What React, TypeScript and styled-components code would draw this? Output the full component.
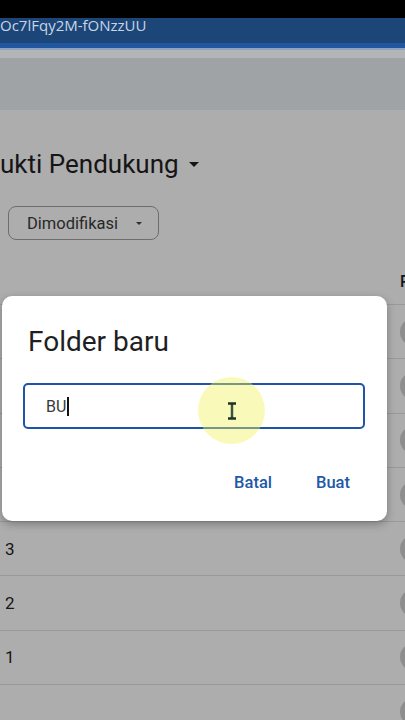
import React from 'react';
import styled, { createGlobalStyle } from 'styled-components';

const GlobalStyle = createGlobalStyle`
  html, body {
    margin: 0;
    padding: 0;
    background: #000;
  }
  body {
    font-family: Roboto, "Liberation Sans", Arial, sans-serif;
  }
  * {
    box-sizing: border-box;
  }
`;

const Screen = styled.div`
  position: relative;
  width: 405px;
  height: 720px;
  overflow: hidden;
  display: flex;
  flex-direction: column;
  background: #fff;
`;

const BlackBar = styled.div`
  height: 18px;
  flex: none;
  background: #000;
`;

const UrlBar = styled.div`
  height: 25px;
  flex: none;
  background: #1b4677;
  display: flex;
  align-items: flex-start;
`;

const UrlText = styled.span`
  font-family: "Open Sans", "Liberation Sans", sans-serif;
  font-size: 15px;
  line-height: 15px;
  color: #c9d5e6;
  white-space: nowrap;
`;

const UrlAccent = styled.div`
  height: 7px;
  flex: none;
  background: #2157a1;
  border-bottom: 2px solid #8ea3c0;
`;

const LightBand = styled.div`
  height: 8px;
  flex: none;
  background: #b4b5b6;
`;

const Page = styled.div`
  position: relative;
  flex: 1;
  display: flex;
  flex-direction: column;
  background: #fff;
`;

const Toolbar = styled.div`
  height: 52px;
  flex: none;
  background: #ebf1f5;
`;

const Content = styled.div`
  display: flex;
  flex-direction: column;
  align-items: flex-start;
`;

const Heading = styled.div`
  margin-top: 36px;
  height: 36px;
  display: flex;
  align-items: center;
  gap: 10px;
  font-size: 26px;
  color: #1f1f1f;
  white-space: nowrap;
`;

const Caret = styled.span<{ $size: number }>`
  width: 0;
  height: 0;
  border-left: ${p => p.$size}px solid transparent;
  border-right: ${p => p.$size}px solid transparent;
  border-top: ${p => p.$size}px solid ${p => (p.$size > 4 ? '#1f1f1f' : '#444746')};
`;

const Chip = styled.div`
  margin: 24px 0 0 8px;
  width: 151px;
  height: 34px;
  border: 1px solid #a2a2a2;
  border-radius: 8px;
  display: flex;
  align-items: center;
  padding-left: 18px;
  gap: 18px;
  font-size: 16.5px;
  font-weight: 400;
  color: #3a3c3b;
`;

const HeaderRow = styled.div`
  margin-top: 19px;
  height: 45px;
  width: 430px;
  display: flex;
  align-items: center;
  font-size: 16px;
  font-weight: 500;
  color: #1f1f1f;
`;

const NameCell = styled.div`
  width: 400px;
  flex: none;
  padding-left: 5px;
`;

const Row = styled.div`
  height: 54.3px;
  width: 440px;
  border-top: 1px solid #e2e2e2;
  display: flex;
  align-items: center;
  font-size: 17px;
  color: #1f1f1f;
`;

const Avatar = styled.div`
  width: 28px;
  height: 28px;
  border-radius: 50%;
  background: #d2d2d2;
`;

const Scrim = styled.div`
  position: absolute;
  inset: 0;
  background: rgba(0, 0, 0, 0.32);
`;

const Dialog = styled.div`
  position: absolute;
  top: 296px;
  left: 2px;
  width: 385px;
  height: 225px;
  background: #fff;
  border-radius: 10px;
  box-shadow: 0 3px 8px rgba(0, 0, 0, 0.3);
  padding: 28px 22px 19px 21px;
  display: flex;
  flex-direction: column;
`;

const DialogTitle = styled.div`
  font-size: 28px;
  line-height: 36px;
  color: #1f1f1f;
  padding-left: 5px;
`;

const InputBox = styled.div`
  margin-top: 23px;
  height: 46px;
  border: 2px solid #1f55a6;
  border-radius: 5px;
  display: flex;
  align-items: center;
  padding-left: 21px;
  font-size: 16px;
  color: #3a3a3a;
`;

const TextCaret = styled.span`
  display: inline-block;
  width: 1.5px;
  height: 19px;
  background: #111;
  margin-left: 1px;
`;

const Actions = styled.div`
  margin-top: auto;
  display: flex;
  justify-content: flex-end;
  gap: 20px;
  padding-right: 3px;
`;

const TextButton = styled.button`
  border: none;
  background: none;
  padding: 0 12px;
  height: 40px;
  font-family: Roboto, "Liberation Sans", sans-serif;
  font-size: 16.5px;
  font-weight: 500;
  color: #2159a8;
`;

const Highlight = styled.div`
  position: absolute;
  left: 196px;
  top: 81px;
  width: 67px;
  height: 67px;
  border-radius: 50%;
  background: rgba(240, 242, 90, 0.42);
  display: flex;
  align-items: center;
  justify-content: center;
`;

const rows = ['7', '6', '5', '4', '3', '2', '1', ''];

export default function App() {
  return (
    <>
      <GlobalStyle />
      <Screen>
        <BlackBar />
        <UrlBar>
          <UrlText>Oc7lFqy2M-fONzzUU</UrlText>
        </UrlBar>
        <UrlAccent />
        <LightBand />
        <Page>
          <Toolbar />
          <Content>
            <Heading>
              ukti Pendukung
              <Caret $size={5} />
            </Heading>
            <Chip>
              Dimodifikasi
              <Caret $size={3.5} />
            </Chip>
            <HeaderRow>
              <NameCell />
              Pemilik
            </HeaderRow>
            {rows.map((r, i) => (
              <Row key={i}>
                <NameCell>{r}</NameCell>
                <Avatar />
              </Row>
            ))}
          </Content>
          <Scrim />
        </Page>
        <BlackBar />
        <Dialog>
          <DialogTitle>Folder baru</DialogTitle>
          <InputBox>
            BU
            <TextCaret />
          </InputBox>
          <Actions>
            <TextButton>Batal</TextButton>
            <TextButton>Buat</TextButton>
          </Actions>
          <Highlight>
            <svg width="10" height="18" viewBox="0 0 10 18">
              <path d="M1 1.5h8M5 1.5v15M1 16.5h8" stroke="#1d3326" strokeWidth="2.4" fill="none" />
              <path d="M5 3v12" stroke="#5f8a6c" strokeWidth="0.8" fill="none" />
            </svg>
          </Highlight>
        </Dialog>
      </Screen>
    </>
  );
}
